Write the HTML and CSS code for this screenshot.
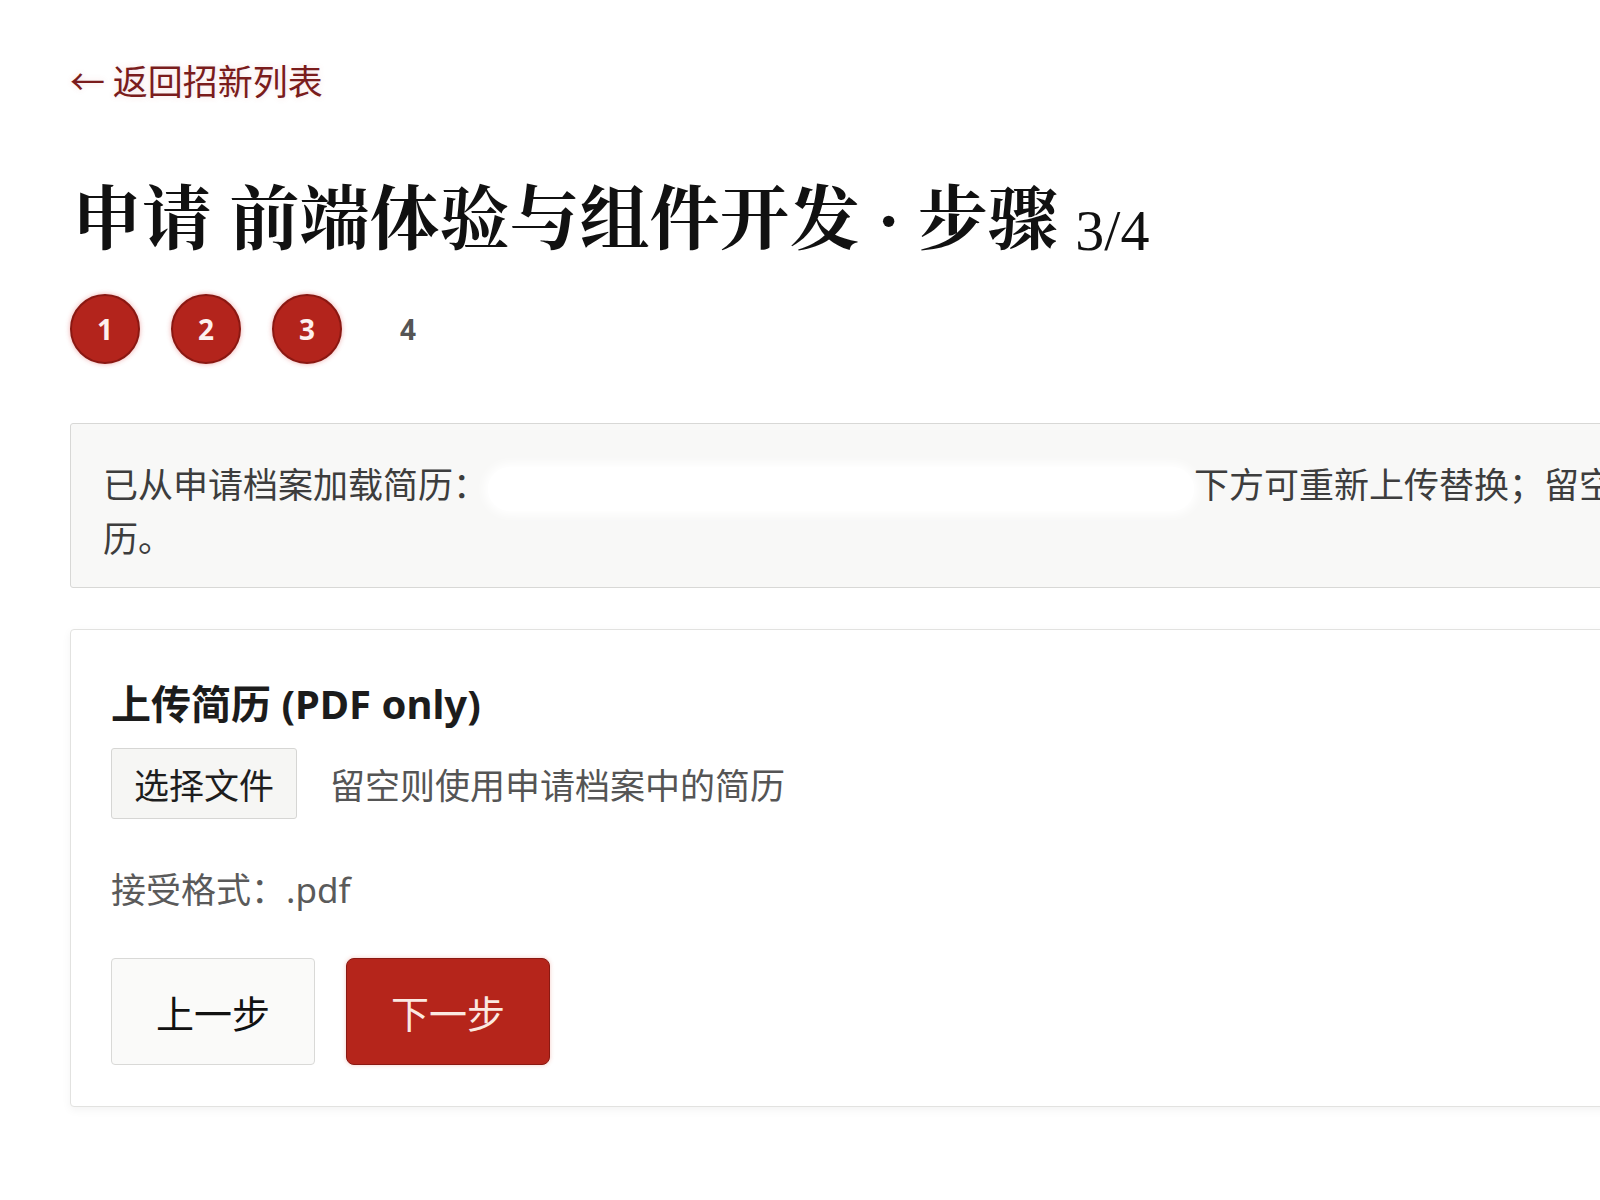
FILE: index.html
```html
<!DOCTYPE html>
<html lang="zh-CN">
<head>
<meta charset="utf-8">
<title>申请 前端体验与组件开发 · 步骤 3/4</title>
<link rel="stylesheet" href="styles.css">
</head>
<body>
<main class="page">
  <a class="back" href="#">← 返回招新列表</a>
  <h1 class="title">申请 前端体验与组件开发 · 步骤 <span class="frac">3/4</span></h1>
  <ol class="steps">
    <li class="step done">1</li>
    <li class="step done">2</li>
    <li class="step done">3</li>
    <li class="step">4</li>
  </ol>
  <div class="notice">已从申请档案加载简历：<span class="redact"></span>下方可重新上传替换；留空则使用申请档案中的简历。</div>
  <section class="card">
    <h2 class="card-title">上传简历 (PDF only)</h2>
    <div class="file-row">
      <button class="file-btn" type="button">选择文件</button>
      <span class="file-hint">留空则使用申请档案中的简历</span>
    </div>
    <p class="accept">接受格式：.pdf</p>
    <div class="actions">
      <button class="btn" type="button">上一步</button>
      <button class="btn primary" type="button">下一步</button>
    </div>
  </section>
</main>
</body>
</html>
```
FILE: styles.css
```css
html, body {
  overflow-x: hidden;
}
body {
  margin: 0;
  background: #ffffff;
  font-family: "Noto Sans", "Noto Sans CJK SC", sans-serif;
  color: #222;
}
.page {
  width: 1945px;
  padding: 55px 0 80px 70px;
  display: flex;
  flex-direction: column;
  align-items: flex-start;
}
.back {
  font-family: "Noto Sans CJK SC", sans-serif;
  font-size: 35px;
  line-height: 49px;
  color: #7a1c1c;
  text-decoration: none;
  text-shadow: 0 0 6px rgba(200, 80, 80, 0.18);
}
.title {
  margin: 75px 0 0 2px;
  font-family: "Liberation Serif", "Noto Serif CJK SC", "Noto Sans CJK SC", serif;
  font-size: 70px;
  line-height: 84px;
  font-weight: 700;
  color: #111;
  letter-spacing: 0;
}
.frac {
  font-size: 58px;
  font-weight: 400;
  position: relative;
  top: 6px;
}
.steps {
  list-style: none;
  margin: 27px 0 0 0;
  padding: 0;
  display: flex;
  gap: 31px;
}
.step {
  width: 70px;
  height: 70px;
  box-sizing: border-box;
  border-radius: 50%;
  display: flex;
  align-items: center;
  justify-content: center;
  font-size: 28px;
  font-weight: 700;
  color: #555;
}
.step.done {
  background: #b3241c;
  border: 2px solid #8a1812;
  color: #fdf0ee;
  box-shadow: 0 0 5px rgba(220, 70, 70, 0.45);
}
.notice {
  margin-top: 59px;
  width: 100%;
  box-sizing: border-box;
  padding: 33px 32px 25px 32px;
  background: #f8f8f7;
  border: 1px solid #d8d8d6;
  border-radius: 3px;
  font-family: "Noto Sans CJK SC", sans-serif;
  font-size: 35px;
  line-height: 51px;
  color: #3d3d3d;
}
.redact {
  display: inline-block;
  width: 706px;
  height: 44px;
  vertical-align: middle;
  background: #ffffff;
  border-radius: 22px;
  box-shadow: 0 0 10px 4px #ffffff;
}
.card {
  margin-top: 41px;
  width: 100%;
  box-sizing: border-box;
  padding: 48px 40px 41px 40px;
  background: #ffffff;
  border: 1px solid #e2e2e0;
  border-radius: 4px;
  box-shadow: 0 3px 10px rgba(0, 0, 0, 0.05);
}
.card-title {
  margin: 0;
  font-size: 40px;
  line-height: 52px;
  font-weight: 700;
  color: #1c1c1c;
}
.file-row {
  margin-top: 18px;
  display: flex;
  align-items: center;
  gap: 33px;
}
.file-btn {
  height: 71px;
  padding: 0 22px;
  background: #f6f6f4;
  border: 1px solid #d6d6d4;
  border-radius: 3px;
  font-family: "Noto Sans CJK SC", sans-serif;
  font-size: 35px;
  color: #1e1e1e;
}
.file-hint {
  font-family: "Noto Sans CJK SC", sans-serif;
  font-size: 35px;
  line-height: 51px;
  color: #555;
}
.accept {
  margin: 45px 0 0 0;
  font-size: 35px;
  line-height: 51px;
  color: #5a5a5a;
}
.actions {
  margin-top: 43px;
  display: flex;
  gap: 31px;
}
.btn {
  width: 204px;
  height: 107px;
  background: #fafaf9;
  border: 1px solid #d9d9d7;
  border-radius: 4px;
  font-family: "Noto Sans CJK SC", sans-serif;
  font-size: 38px;
  color: #111;
}
.btn.primary {
  background: #b5251b;
  border: 1px solid #8a1912;
  border-radius: 8px;
  color: #fbe9e1;
  box-shadow: 0 0 4px rgba(220, 80, 60, 0.3);
}
```
